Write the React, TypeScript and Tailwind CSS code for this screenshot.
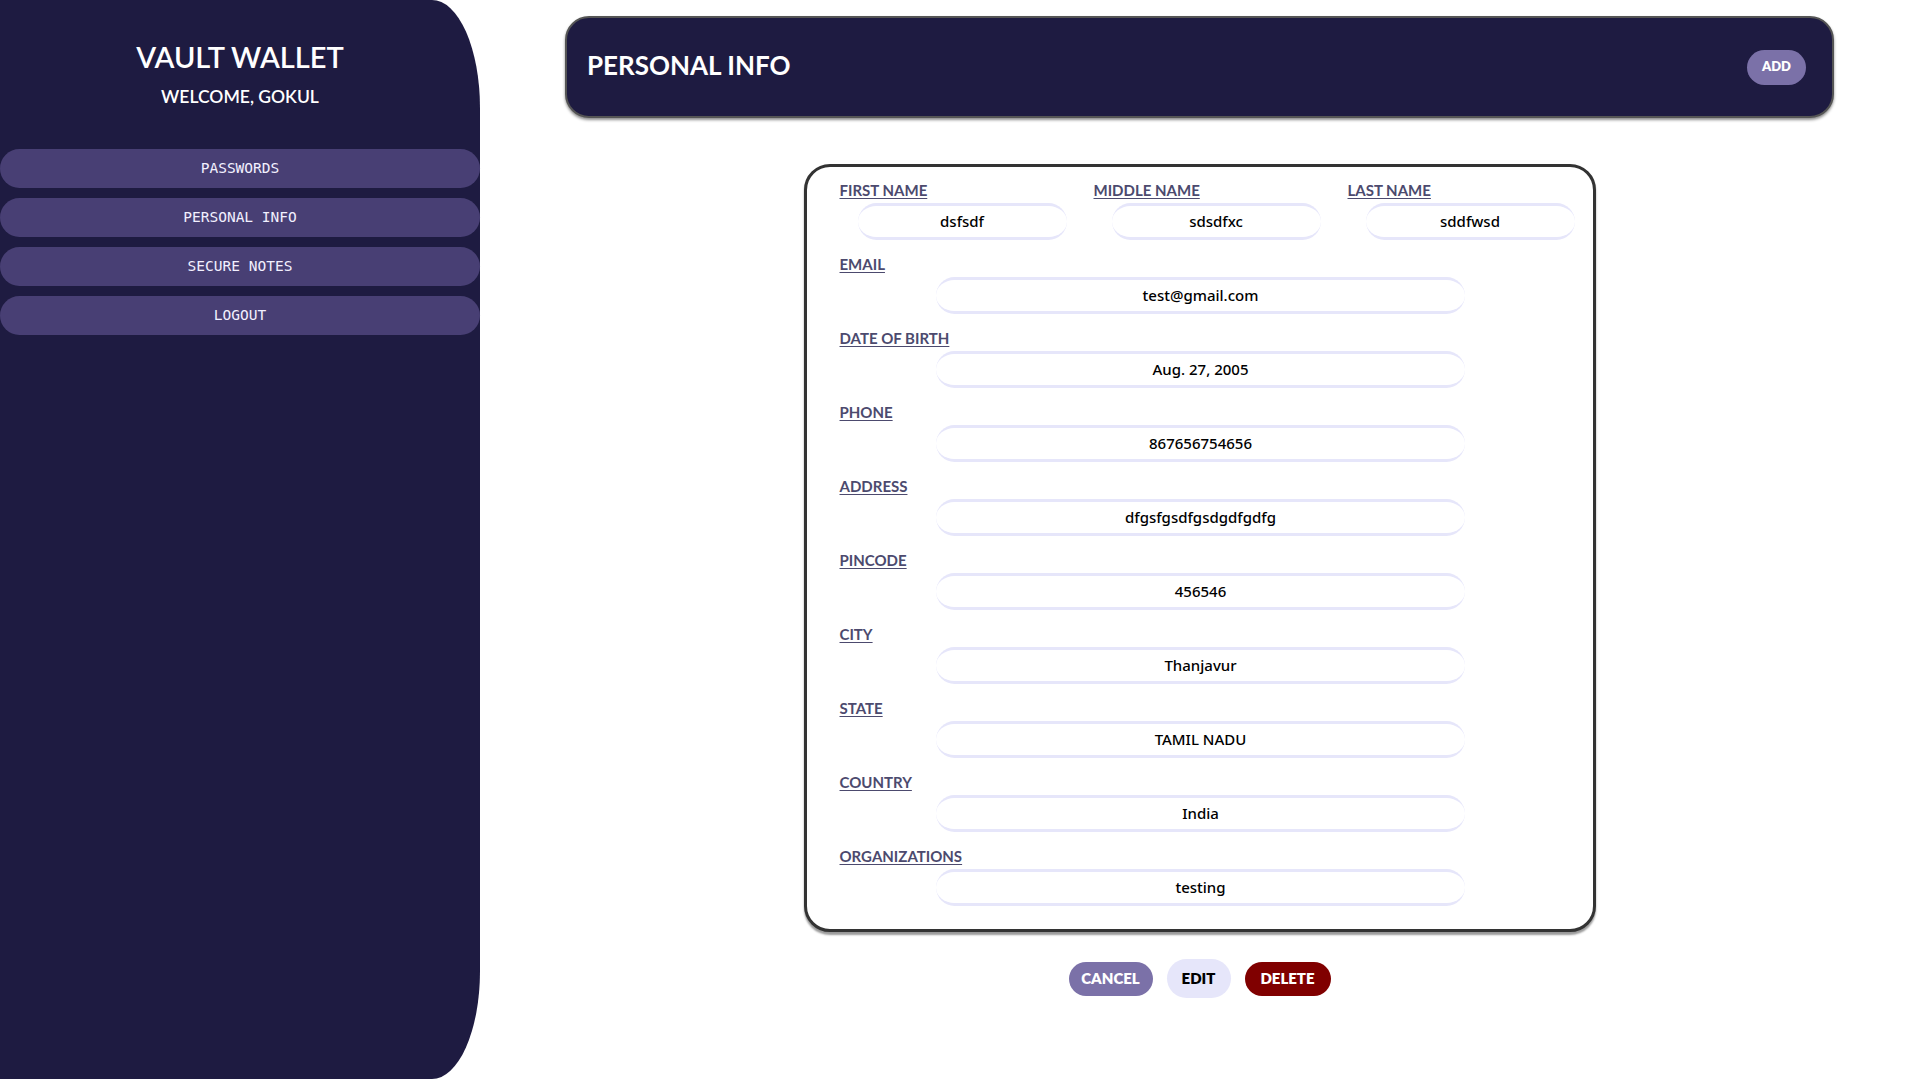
import React from 'react'

const navItems = ['PASSWORDS', 'PERSONAL INFO', 'SECURE NOTES', 'LOGOUT']

const nameFields = [
  { label: 'FIRST NAME', value: 'dsfsdf' },
  { label: 'MIDDLE NAME', value: 'sdsdfxc' },
  { label: 'LAST NAME', value: 'sddfwsd' },
]

const fields = [
  { label: 'EMAIL', value: 'test@gmail.com' },
  { label: 'DATE OF BIRTH', value: 'Aug. 27, 2005' },
  { label: 'PHONE', value: '867656754656' },
  { label: 'ADDRESS', value: 'dfgsfgsdfgsdgdfgdfg' },
  { label: 'PINCODE', value: '456546' },
  { label: 'CITY', value: 'Thanjavur' },
  { label: 'STATE', value: 'TAMIL NADU' },
  { label: 'COUNTRY', value: 'India' },
  { label: 'ORGANIZATIONS', value: 'testing' },
]

const Label = ({ text }: { text: string }) => (
  <div className="font-['Lato',sans-serif] text-[15px] leading-[20px] font-bold text-[#4c4a6e] underline underline-offset-2">
    {text}
  </div>
)

const Value = ({ text, className }: { text: string; className: string }) => (
  <div
    className={
      "h-[37px] rounded-full border-y-[3px] border-[#e6e6fa] flex items-center justify-center font-['Noto_Sans',sans-serif] text-[15px] font-medium text-black " +
      className
    }
  >
    {text}
  </div>
)

const App = () => {
  return (
    <div className="flex min-h-screen bg-white">
      <aside className="w-[480px] h-screen shrink-0 bg-[#1e1b41] rounded-r-[10%] flex flex-col items-center pt-[39px]">
        <h1 className="font-['Lato',sans-serif] text-[29px] leading-[36px] font-semibold text-white">VAULT WALLET</h1>
        <p className="mt-[9px] font-['Lato',sans-serif] text-[17.5px] leading-[26px] font-semibold text-white">WELCOME, GOKUL</p>
        <nav className="mt-[39px] w-full flex flex-col gap-[10px]">
          {navItems.map((item) => (
            <button
              key={item}
              className="h-[39px] w-full rounded-full bg-[#483f74] text-[#f2f0ff] font-['DejaVu_Sans_Mono',monospace] text-[14.5px] whitespace-pre"
            >
              {item}
            </button>
          ))}
        </nav>
      </aside>

      <main className="flex-1 flex flex-col items-center">
        <header className="mt-[16px] w-[1269px] h-[102px] rounded-[24px] border-2 border-[#555] bg-[#1e1b41] shadow-[0_2px_3px_rgba(0,0,0,0.45)] flex items-center justify-between pl-[20px] pr-[26px]">
          <h2 className="font-['Lato',sans-serif] text-[26px] font-bold text-white -mt-[3px]">PERSONAL INFO</h2>
          <button className="w-[59px] h-[35px] rounded-full bg-[#7b71a8] text-white font-['Lato',sans-serif] text-[13px] font-extrabold">
            ADD
          </button>
        </header>

        <section className="mt-[46px] w-[792px] rounded-[26px] border-[3px] border-[#333] shadow-[0_3px_2px_rgba(0,0,0,0.4)] bg-white pt-[13px] pb-[23px] pl-[33px] pr-[31px]">
          <div className="flex">
            {nameFields.map((f) => (
              <div key={f.label} className="w-[254px] shrink-0">
                <Label text={f.label} />
                <Value text={f.value} className="mt-[3px] ml-[18px] w-[209px]" />
              </div>
            ))}
          </div>
          {fields.map((f) => (
            <div key={f.label} className="mt-[14px]">
              <Label text={f.label} />
              <Value text={f.value} className="mt-[3px] mx-auto w-[529px]" />
            </div>
          ))}
        </section>

        <div className="mt-[27px] flex items-center justify-center gap-[14px] font-['Lato',sans-serif] text-[15px] font-extrabold">
          <button className="w-[84px] h-[34px] rounded-full bg-[#7b71a8] text-white">CANCEL</button>
          <button className="w-[64px] h-[39px] rounded-full bg-[#e6e6fa] text-black">EDIT</button>
          <button className="w-[86px] h-[34px] rounded-full bg-[#800000] text-white">DELETE</button>
        </div>
      </main>
    </div>
  )
}

export default App
